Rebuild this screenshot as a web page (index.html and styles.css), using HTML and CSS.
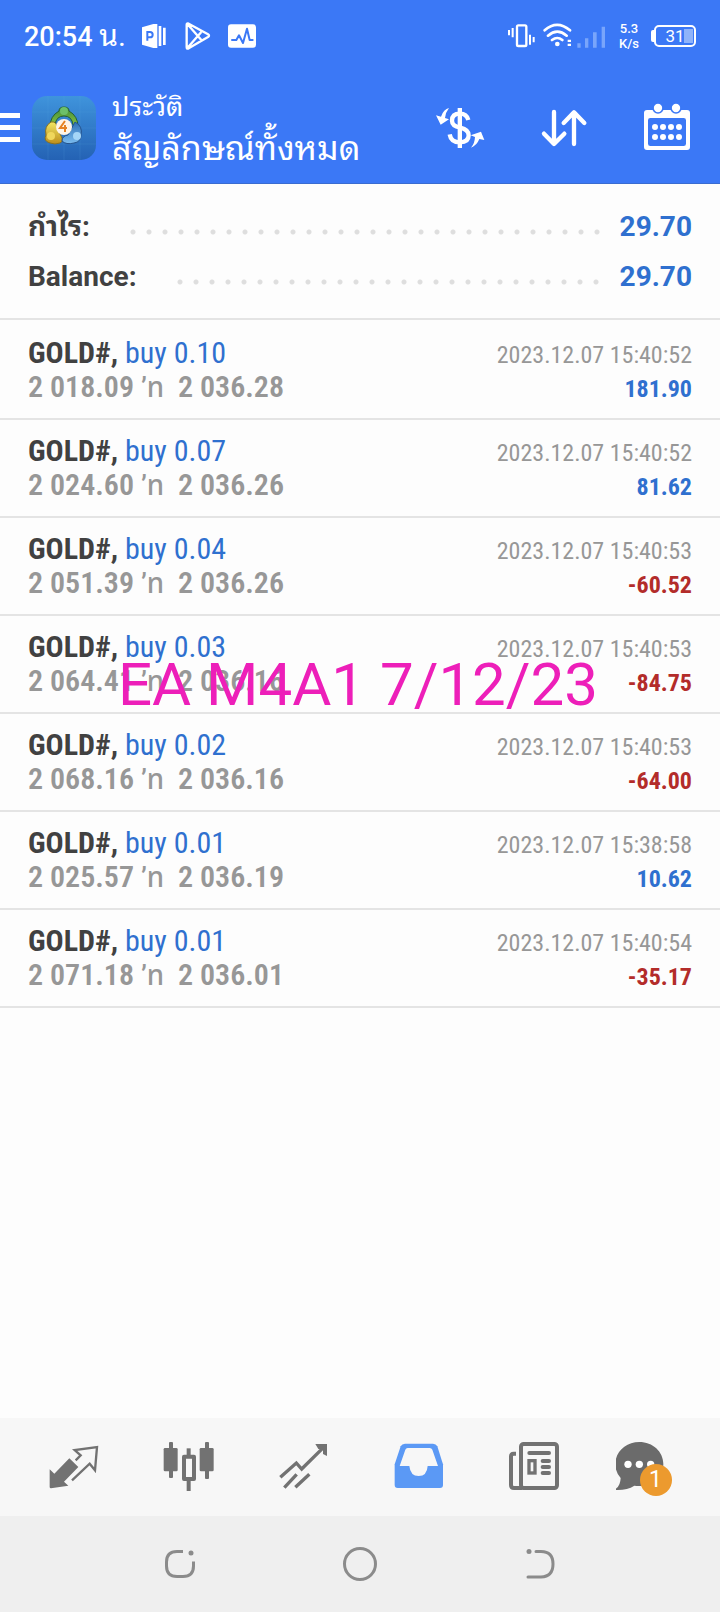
FILE: index.html
```html
<!DOCTYPE html>
<html lang="th">
<head>
<meta charset="utf-8">
<meta name="viewport" content="width=device-width, initial-scale=1">
<title>ประวัติ</title>
<link rel="stylesheet" href="styles.css">
</head>
<body>
<div class="screen">
  <header class="header">
    <div class="status">
      <span class="clock">20:54 <span class="unit">น.</span></span>
      <svg class="status-left" viewBox="420 54 354 108" aria-hidden="true">
        <path fill="#fff" d="M426 82l34-10h12v72h-12l-34-10zM476 78h8v60h-8zM489 83h8v52h-8z"/>
        <path fill="none" stroke="#3b78f6" stroke-width="6" d="M442 122V96h8a8 8 0 0 1 0 16h-8"/>
        <path fill="none" stroke="#fff" stroke-width="7" stroke-linejoin="round" d="M560 74q0-5 6-3l58 32q6 4 0 8l-58 34q-6 3-6-3zM562 72l42 48M562 144l42-48"/>
        <rect x="684" y="73" width="84" height="70" rx="9" fill="#fff"/>
        <path fill="none" stroke="#3b78f6" stroke-width="6" stroke-linejoin="round" stroke-linecap="round" d="M696 120h13l8-14 12 23 12-43 8 34h9"/>
      </svg>
      <span class="spacer"></span>
      <svg class="status-signal" viewBox="441 54 300 108" aria-hidden="true">
        <g fill="none" stroke="#fff">
          <rect x="471" y="76" width="28" height="62" rx="4" stroke-width="7"/>
          <path stroke-width="6" d="M447 90v16M458 84v28M510 104v30M521 111v16"/>
          <path stroke-width="8" stroke-linecap="round" d="M554 91q37-33 76 0M564 107q28-24 56 0M576 120q16-12 31 0"/>
        </g>
        <circle cx="592" cy="132" r="7" fill="#fff"/>
        <path fill="#fff" d="M623 119h10v7h-10zM623 131h10v7h-10z"/>
        <path fill="#79a5fb" d="M652 130h10v13h-10zM675 115h10v28h-10zM699 97h11v46h-11zM725 80h10v63h-10z"/>
      </svg>
      <span class="speed">5.3<br>K/s</span>
      <span class="battery"><span class="battery-cell">31</span></span>
    </div>
    <div class="appbar">
      <button class="menu" type="button" aria-label="Menu"><i></i><i></i><i></i></button>
      <svg class="logo" viewBox="0 0 64 64" aria-hidden="true">
        <defs>
          <linearGradient id="bg" x1="0" y1="0" x2="0" y2="1"><stop offset="0" stop-color="#3f94dc"/><stop offset="1" stop-color="#2462b4"/></linearGradient>
          <linearGradient id="gr" x1="0" y1="0" x2="0" y2="1"><stop offset="0" stop-color="#3d8b3c"/><stop offset="1" stop-color="#8ec63f"/></linearGradient>
          <linearGradient id="ye" x1="0" y1="0" x2="0" y2="1"><stop offset="0" stop-color="#f1e763"/><stop offset="1" stop-color="#bd8d1c"/></linearGradient>
          <linearGradient id="bl" x1="0" y1="0" x2="0" y2="1"><stop offset="0" stop-color="#2e6fb5"/><stop offset="1" stop-color="#7cbdf0"/></linearGradient>
        </defs>
        <rect width="64" height="64" rx="15" fill="url(#bg)"/>
        <path stroke="#62aee8" stroke-opacity=".15" d="M16 0v64M32 0v64M48 0v64M0 16h64M0 32h64M0 48h64"/>
        <path fill="url(#gr)" stroke="#245f35" d="M27 15q0-4 5-4t5 4q9 5 9 16l-5-2q-1-9-9-9t-9 9l-5 2q0-11 9-16z"/>
        <path fill="url(#ye)" stroke="#8a7122" d="M19 26q6-1 6 6l4 8q3 5-1 7-5 2-10 0-7-2-4-8-2-9 5-13z"/>
        <path fill="url(#bl)" stroke="#24528c" d="M43 26q8 4 6 13 0 7-7 8-8 2-12-2 0-5 6-6z"/>
        <circle cx="32" cy="15" r="4" fill="#6cc06a"/>
        <circle cx="19" cy="40" r="4" fill="#f0d75c"/>
        <circle cx="45" cy="40" r="4" fill="#a4d5f7"/>
        <circle cx="32" cy="31" r="8" fill="#fff4e6"/>
        <path fill="none" stroke="#e68324" stroke-width="2" d="M33 25l-5 7h7M33 29v7"/>
      </svg>
      <div class="titles">
        <div class="subtitle">ประวัติ</div>
        <h1 class="title">สัญลักษณ์ทั้งหมด</h1>
      </div>
      <button class="action" type="button" aria-label="Symbol">
        <svg class="action-icon" viewBox="210 294 180 180">
          <path fill="none" stroke="#fff" stroke-width="13" d="M325 360q-5-19-25-19-24 0-24 21 0 16 25 21 25 6 25 23 0 21-26 21-27 0-31-24"/>
          <path fill="#fff" d="M293 324h13v120h-13zM267 324q-16 3-24 26l-15-4 14 28 25-16-12-4q1-16 12-30zM333 443q17-6 25-26l15 3-10-25-31 11 13 5q-1 20-12 32z"/>
        </svg>
      </button>
      <button class="action" type="button" aria-label="Sort">
        <svg class="action-icon" viewBox="522 294 180 180">
          <path fill="none" stroke="#fff" stroke-width="13" stroke-linecap="round" stroke-linejoin="round" d="M582 336v94M552 401l30 31 31-31M642 432v-94M611 369l31-32 31 32"/>
        </svg>
      </button>
      <button class="action" type="button" aria-label="Calendar">
        <svg class="action-icon" viewBox="834 294 180 180">
          <path fill="#fff" fill-rule="evenodd" d="M861 330h120q9 0 9 9v102q0 9-9 9H861q-9 0-9-9V339q0-9 9-9zM871 354q-7 0-7 7v70q0 7 7 7h100q7 0 7-7v-70q0-7-7-7z"/>
          <g fill="#fff" stroke="#3b78f6" stroke-width="5"><circle cx="894" cy="324" r="15"/><circle cx="948" cy="324" r="15"/></g>
          <path fill="none" stroke="#fff" stroke-width="18" stroke-linecap="round" stroke-dasharray="0 24" d="M885 381h73M885 411h73"/>
        </svg>
      </button>
    </div>
  </header>

  <main class="content">
    <dl class="summary">
      <div class="sum-row"><dt>กำไร:</dt><dd class="dots" aria-hidden="true"></dd><dd class="sum-value">29.70</dd></div>
      <div class="sum-row"><dt>Balance:</dt><dd class="dots" aria-hidden="true"></dd><dd class="sum-value">29.70</dd></div>
    </dl>
    <ul class="deals">
      <li class="deal"><div class="line"><span class="symbol">GOLD#, <span class="side">buy 0.10</span></span><time class="time">2023.12.07 15:40:52</time></div><div class="line"><span class="prices">2 018.09 <span class="to">’ท</span>&nbsp; 2 036.28</span><span class="gain">181.90</span></div></li>
      <li class="deal"><div class="line"><span class="symbol">GOLD#, <span class="side">buy 0.07</span></span><time class="time">2023.12.07 15:40:52</time></div><div class="line"><span class="prices">2 024.60 <span class="to">’ท</span>&nbsp; 2 036.26</span><span class="gain">81.62</span></div></li>
      <li class="deal"><div class="line"><span class="symbol">GOLD#, <span class="side">buy 0.04</span></span><time class="time">2023.12.07 15:40:53</time></div><div class="line"><span class="prices">2 051.39 <span class="to">’ท</span>&nbsp; 2 036.26</span><span class="gain loss">-60.52</span></div></li>
      <li class="deal"><div class="line"><span class="symbol">GOLD#, <span class="side">buy 0.03</span></span><time class="time">2023.12.07 15:40:53</time></div><div class="line"><span class="prices">2 064.41 <span class="to">’ท</span>&nbsp; 2 036.16</span><span class="gain loss">-84.75</span></div><div class="caption">EA M4A1 7/12/23</div></li>
      <li class="deal"><div class="line"><span class="symbol">GOLD#, <span class="side">buy 0.02</span></span><time class="time">2023.12.07 15:40:53</time></div><div class="line"><span class="prices">2 068.16 <span class="to">’ท</span>&nbsp; 2 036.16</span><span class="gain loss">-64.00</span></div></li>
      <li class="deal"><div class="line"><span class="symbol">GOLD#, <span class="side">buy 0.01</span></span><time class="time">2023.12.07 15:38:58</time></div><div class="line"><span class="prices">2 025.57 <span class="to">’ท</span>&nbsp; 2 036.19</span><span class="gain">10.62</span></div></li>
      <li class="deal"><div class="line"><span class="symbol">GOLD#, <span class="side">buy 0.01</span></span><time class="time">2023.12.07 15:40:54</time></div><div class="line"><span class="prices">2 071.18 <span class="to">’ท</span>&nbsp; 2 036.01</span><span class="gain loss">-35.17</span></div></li>
    </ul>
  </main>

  <nav class="tabs">
    <button class="tab" type="button" aria-label="Quotes">
      <svg class="tab-icon" viewBox="122 75 192 192">
        <path fill="#727272" d="M207 145l27 26-43 44 13 12-52 8q-4 0-4-4v-53l14 13z"/>
        <path fill="none" stroke="#727272" stroke-width="7" d="M226 151l15-15-18-16 67-9-6 70-16-20-53 50"/>
      </svg>
    </button>
    <button class="tab" type="button" aria-label="Charts">
      <svg class="tab-icon" viewBox="467 75 192 192">
        <g fill="#727272"><rect x="490" y="114" width="42" height="70" rx="4"/><rect x="506" y="96" width="12" height="108" rx="3"/><rect x="598" y="114" width="42" height="70" rx="4"/><rect x="614" y="96" width="12" height="111" rx="3"/><rect x="559" y="115" width="12" height="24"/><rect x="559" y="208" width="12" height="35"/></g>
        <rect x="551" y="140" width="30" height="67" fill="#f7f7f7" stroke="#727272" stroke-width="12" stroke-linejoin="round"/>
      </svg>
    </button>
    <button class="tab" type="button" aria-label="Trade">
      <svg class="tab-icon" viewBox="812 75 192 192">
        <path fill="none" stroke="#727272" stroke-width="10" d="M840 202l48-43 16 18 68-67M852 233l37-40M885 232l42-39"/>
        <path fill="#727272" d="M945 102h35v36l-12-6v-15h-14z"/>
      </svg>
    </button>
    <button class="tab" type="button" aria-label="History">
      <svg class="tab-icon" viewBox="77 75 192 192">
        <path fill="#5b99f5" d="M134 101h84q9 0 13 8l17 54v62q0 9-9 9H112q-9 0-9-9v-62l18-54q4-8 13-8z"/>
        <path fill="#f7f7f7" d="M142 114h66q6 0 8 5l17 49h-31q-2 30-27 30t-28-30h-29l17-49q2-5 7-5z"/>
      </svg>
    </button>
    <button class="tab" type="button" aria-label="News">
      <svg class="tab-icon" viewBox="422 75 192 192">
        <g fill="none" stroke="#727272" stroke-width="12" stroke-linecap="round">
          <rect x="482" y="102" width="108" height="132" rx="8"/>
          <path stroke-linecap="butt" d="M467 131h-7q-8 0-8 8v86q0 9 9 9h25"/>
          <path d="M507 129h59M547 153h19M547 171h19M547 189h19"/>
          <rect x="506" y="152" width="18" height="37" stroke-width="10"/>
        </g>
      </svg>
    </button>
    <button class="tab" type="button" aria-label="Messages">
      <span class="with-badge">
        <svg class="tab-icon" viewBox="767 75 192 192">
          <path fill="#6b6b6b" d="M837 96c40 0 72 29 72 66s-32 66-72 66q-8 0-15-1-22 14-54 13-4-1 0-5 12-9 13-31-16-18-16-42c0-37 32-66 72-66z"/>
          <g fill="#fff"><circle cx="803" cy="163" r="11"/><circle cx="837" cy="163" r="11"/><circle cx="871" cy="163" r="11"/></g>
        </svg>
        <span class="badge">1</span>
      </span>
    </button>
  </nav>
  <nav class="sysnav">
    <button class="sys" type="button" aria-label="Recent apps">
      <svg class="sys-icon" viewBox="0 0 36 36"><path fill="none" stroke="#8b8b8b" stroke-width="3" d="M21 5.500h-6q-10.500 0-10.500 10.500v4q0 10.500 10.500 10.500h6q10.500 0 10.500-10.500v-4.500"/><circle cx="29" cy="7" r="2.500" fill="#8b8b8b"/></svg>
    </button>
    <button class="sys" type="button" aria-label="Home">
      <svg class="sys-icon" viewBox="0 0 36 36"><circle cx="18" cy="18" r="15.500" fill="none" stroke="#8b8b8b" stroke-width="3"/></svg>
    </button>
    <button class="sys" type="button" aria-label="Back">
      <svg class="sys-icon" viewBox="0 0 36 36"><path fill="none" stroke="#8b8b8b" stroke-width="3" stroke-linecap="round" d="M14 5.500h5q12 0 12 12.500t-12 13H6"/><circle cx="7" cy="5.500" r="2.500" fill="#8b8b8b"/></svg>
    </button>
  </nav>
</div>
</body>
</html>
```
FILE: styles.css
```css
* { box-sizing: border-box; margin: 0; padding: 0; }
body { background: #fdfdfd; font-family: Roboto, "Noto Sans Thai Looped", "Noto Sans Thai", "Noto Sans", sans-serif; }
button { border: 0; background: none; color: inherit; font: inherit; }
svg { display: block; flex: none; }

.screen { display: flex; flex-direction: column; min-height: 100vh; }

.header { background: #3b78f6; color: #fff; }
.status { display: flex; align-items: center; height: 72px; padding: 0 24px; }
.clock { width: 116px; font-size: 27px; font-weight: 500; line-height: 40px; white-space: nowrap; }
.unit { font-size: 30px; font-weight: 400; }
.status-left { width: 118px; height: 36px; }
.spacer { flex: 1; }
.status-signal { width: 100px; height: 36px; }
.speed { margin: 0 12px; font-size: 13px; font-weight: 500; line-height: 15px; text-align: center; }
.battery { display: flex; align-items: center; }
.battery::before { content: ""; width: 3px; height: 12px; background: #fff; border-radius: 2px 0 0 2px; }
.battery-cell {
  width: 42px; height: 22px; border: 2px solid #fff; border-radius: 5px;
  background: linear-gradient(#8fb3fa, #8fb3fa) 28px 2px / 9px 14px no-repeat;
  font-size: 17px; line-height: 19px; text-align: center;
}

.appbar { display: flex; align-items: center; height: 112px; border-bottom: 1px solid #3a6cd0; }
.menu { display: flex; flex-direction: column; gap: 7px; width: 20px; margin-right: 12px; }
.menu i { display: block; width: 20px; height: 5px; background: #fff; }
.logo { width: 64px; height: 64px; margin-right: 16px; }
.titles { flex: 1; min-width: 0; padding-top: 4px; white-space: nowrap; }
.subtitle { font-size: 27px; line-height: 36px; }
.title { font-size: 34px; font-weight: 400; line-height: 46px; }
.action { display: flex; justify-content: center; width: 104px; }
.action-icon { width: 60px; height: 60px; }

.content { flex: 1; }
.summary { padding: 18px 28px 16px; border-bottom: 2px solid #e4e4e4; }
.sum-row { display: flex; align-items: center; height: 50px; font-size: 28px; font-weight: 700; line-height: 40px; color: #414141; }
.dots {
  flex: 1; height: 16px; margin: 10px 20px 0 35px;
  background: radial-gradient(circle, #dedede 2px, transparent 3px) left center / 16px 16px repeat-x;
}
.sum-value { color: #2f70cf; }

.deals { list-style: none; font-family: "Roboto Condensed", Roboto, "Noto Sans Thai", sans-serif; }
.deal { position: relative; padding: 14px 28px; border-bottom: 2px solid #e4e4e4; }
.deal:first-child { padding-top: 16px; }
.line { display: flex; justify-content: space-between; align-items: baseline; height: 34px; line-height: 34px; white-space: nowrap; }
.symbol { font-size: 30px; font-weight: 700; color: #414141; }
.side { font-weight: 400; color: #2f70cf; }
.time { font-size: 24px; color: #979797; }
.prices { font-size: 30px; font-weight: 600; color: #979797; }
.to { font-size: 28px; font-weight: 500; }
.gain { font-size: 24px; font-weight: 700; color: #2f70cf; }
.loss { color: #b32c2a; }
.caption {
  position: absolute; left: 0; right: 0; bottom: -8px; z-index: 1; padding-right: 4px;
  font-family: Roboto, sans-serif; font-size: 60px; line-height: 70px; text-align: center; white-space: nowrap; color: #ed1fb9;
}

.tabs { display: flex; height: 98px; padding: 0 15px; background: #f7f7f7; }
.tab { flex: 1; display: flex; align-items: center; justify-content: center; }
.tab-icon { width: 64px; height: 64px; }
.with-badge { position: relative; }
.badge {
  position: absolute; left: 24px; top: 29px; width: 32px; height: 32px; border-radius: 50%;
  background: #ec9a2e; color: #fff; font-size: 23px; line-height: 32px; text-align: center;
}

.sysnav { display: flex; height: 96px; padding: 0 90px; background: #efefef; }
.sys { flex: 1; display: flex; align-items: center; justify-content: center; }
.sys-icon { width: 36px; height: 36px; }
```
